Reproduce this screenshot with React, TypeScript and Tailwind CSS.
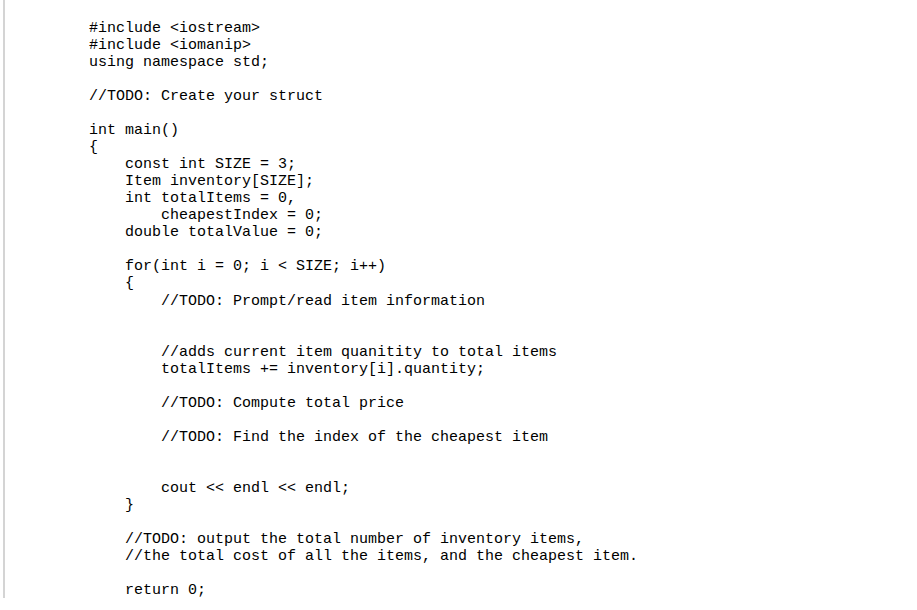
const code = `#include <iostream>
#include <iomanip>
using namespace std;

//TODO: Create your struct

int main()
{
    const int SIZE = 3;
    Item inventory[SIZE];
    int totalItems = 0,
        cheapestIndex = 0;
    double totalValue = 0;

    for(int i = 0; i < SIZE; i++)
    {
        //TODO: Prompt/read item information


        //adds current item quanitity to total items
        totalItems += inventory[i].quantity;

        //TODO: Compute total price

        //TODO: Find the index of the cheapest item


        cout << endl << endl;
    }

    //TODO: output the total number of inventory items,
    //the total cost of all the items, and the cheapest item.

    return 0;`;

export default function App() {
  return (
    <div className="w-[917px] h-[610px] bg-white overflow-hidden">
      <div className="ml-[3px] h-[598px] border-l-2 border-[#d4d4d4] overflow-hidden">
        <pre className="pl-[84px] pt-[20px] font-['Liberation_Mono',monospace] text-[15px] leading-[17.03px] text-black">
          {code}
        </pre>
      </div>
    </div>
  );
}
